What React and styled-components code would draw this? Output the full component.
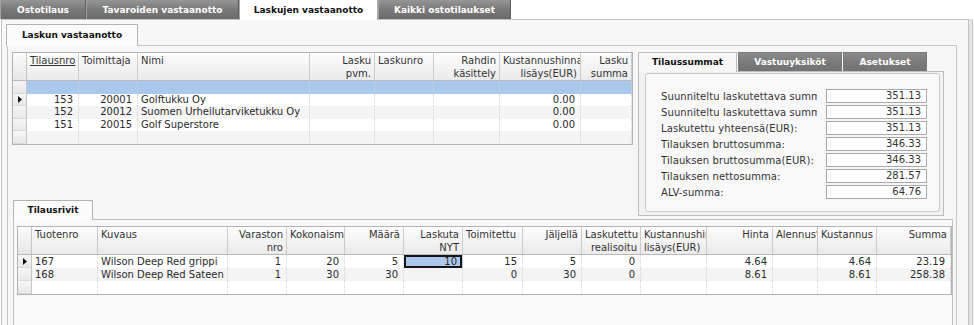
import React from 'react';
import styled, { createGlobalStyle } from 'styled-components';

const GlobalStyle = createGlobalStyle`
  html, body {
    margin: 0;
    padding: 0;
    background: #ffffff;
  }
  body {
    font-family: "DejaVu Sans", Verdana, sans-serif;
    font-size: 10px;
    color: #2b2b2b;
  }
  * {
    box-sizing: border-box;
  }
`;

const Screen = styled.div`
  width: 974px;
  height: 325px;
  overflow: hidden;
  display: flex;
  flex-direction: column;
  background: #fff;
`;

/* ---------- tabs ---------- */

const MainTabBar = styled.div`
  display: flex;
  align-items: flex-start;
  height: 19px;
  flex: none;
`;

const MainTab = styled.div`
  width: ${p => p.$w}px;
  height: ${p => (p.$active ? 20 : 19)}px;
  display: flex;
  align-items: center;
  justify-content: center;
  padding-bottom: ${p => (p.$active ? 1 : 0)}px;
  font-size: 9px;
  font-weight: bold;
  white-space: nowrap;
  color: ${p => (p.$active ? '#111' : '#fff')};
  background: ${p => (p.$active ? '#fff' : 'linear-gradient(#959595, #777 55%, #6b6b6b)')};
  border-left: 1px solid ${p => (p.$active ? '#a9a9a9' : '#a4a4a4')};
  border-right: 1px solid ${p => (p.$active ? '#a9a9a9' : '#5f5f5f')};
  position: relative;
  z-index: ${p => (p.$active ? 1 : 0)};
`;

const PageTab = styled.div`
  width: ${p => p.$w}px;
  height: ${p => p.$h}px;
  margin-left: ${p => p.$ml || 0}px;
  display: flex;
  align-items: center;
  justify-content: center;
  padding-bottom: 1px;
  font-size: 9px;
  font-weight: bold;
  color: #111;
  background: #fbfbfb;
  border: 1px solid #b3b3b3;
  border-bottom: none;
  position: relative;
  z-index: 1;
`;

const SideTab = styled.div`
  width: ${p => p.$w}px;
  height: ${p => (p.$active ? 20 : 19)}px;
  margin-right: 1px;
  display: flex;
  align-items: center;
  justify-content: center;
  padding-bottom: ${p => (p.$active ? 1 : 0)}px;
  font-size: 9px;
  font-weight: bold;
  color: ${p => (p.$active ? '#111' : '#fff')};
  background: ${p => (p.$active ? '#f7f7f7' : 'linear-gradient(#8c8c8c, #7a7a7a 50%, #737373)')};
  border: 1px solid ${p => (p.$active ? '#bdbdbd' : '#7a7a7a')};
  border-bottom: none;
  position: relative;
  z-index: ${p => (p.$active ? 1 : 0)};
`;

/* ---------- panels ---------- */

const OuterPanel = styled.div`
  flex: none;
  width: 968px;
  margin-left: 1px;
  border: 1px solid #c2c2c2;
  border-bottom: none;
  background: #f7f7f7;
  padding: 4px 11px 0 5px;
  box-shadow: 3px 0 0 #e4e4e4, 4px 0 0 #c6c6c6;
`;

const SubTabStrip = styled.div`
  display: flex;
  align-items: flex-start;
  height: 21px;
`;

const InnerPanel = styled.div`
  width: 950px;
  border: 1px solid #c6c6c6;
  border-bottom: none;
  background: #f6f6f6;
  padding: 6px 3px 0 4px;
  display: grid;
  grid-template-columns: 626px 306px 1fr;
  grid-template-rows: 148px 19px 130px;
`;

const OrdersArea = styled.div`
  grid-column: 1;
  grid-row: 1;
  align-self: start;
`;

const LinesTabArea = styled.div`
  grid-column: 1;
  grid-row: 2;
  display: flex;
  align-items: flex-start;
`;

const LinesPanel = styled.div`
  grid-column: 1 / -1;
  grid-row: 3;
  margin-left: 1px;
  border: 1px solid #c0c0c0;
  background: #f8f8f8;
  padding: 6px 0 0 3px;
`;

const SideTabs = styled.div`
  grid-column: 2;
  grid-row: 1 / span 2;
  align-self: start;
  height: 164px;
  display: flex;
  flex-direction: column;
`;

const SideTabStrip = styled.div`
  display: flex;
  align-items: flex-start;
  height: 19px;
  flex: none;
`;

const SidePage = styled.div`
  flex: 1;
  border: 1px solid #bdbdbd;
  background: #f1f1f1;
  padding: 1px 3px 3px 6px;
  display: flex;
`;

const GroupBox = styled.div`
  flex: 1;
  border: 1px solid #c9c9c9;
  border-radius: 3px;
  background: #f8f8f8;
  padding: 15px 12px 0 15px;
  display: flex;
  flex-direction: column;
  gap: 2px;
`;

const Field = styled.div`
  display: flex;
  align-items: center;
  height: 14px;
`;

const FieldLabel = styled.div`
  width: 156px;
  overflow: hidden;
  white-space: nowrap;
  color: #333;
  letter-spacing: 0.1px;
`;

const FieldValue = styled.div`
  margin-left: auto;
  width: 101px;
  height: 14px;
  border: 1px solid #a9a9a9;
  background: #fff;
  text-align: right;
  padding: 0 5px;
  line-height: 12px;
  color: #333;
`;

/* ---------- data grid ---------- */

const GridFrame = styled.div`
  display: grid;
  grid-template-columns: ${p => p.$cols};
  grid-template-rows: ${p => p.$headH}px;
  grid-auto-rows: ${p => p.$rowH}px;
  width: ${p => p.$width}px;
  border: 1px solid #b3b3b3;
  background: #fff;
`;

const CornerCell = styled.div`
  background: linear-gradient(#fbfbfb, #e6e6e6);
  border-right: 1px solid #c6c6c6;
  border-bottom: 1px solid #b9b9b9;
`;

const HeadCell = styled.div`
  background: linear-gradient(#fdfdfd, #eaeaea);
  border-right: 1px solid #cbcbcb;
  border-bottom: 1px solid #b9b9b9;
  padding: 1px 3px 0 3px;
  text-align: ${p => p.$align};
  line-height: 13px;
  color: #333;
  overflow: hidden;
  white-space: nowrap;
`;

const HeadLine = styled.span`
  display: block;
  text-decoration: ${p => (p.$sorted ? 'underline' : 'none')};
`;

const RowHead = styled.div`
  background: linear-gradient(#f6f6f6, #e8e8e8);
  border-right: 1px solid #c6c6c6;
  border-bottom: 1px solid #d9d9d9;
  display: flex;
  align-items: center;
  justify-content: center;
`;

const Cell = styled.div`
  background: ${p => p.$bg};
  border-right: 1px dotted #d3d3d3;
  padding: 0 5px 0 3px;
  text-align: ${p => p.$align};
  line-height: ${p => p.$rowH}px;
  color: #2a2a2a;
  overflow: hidden;
  white-space: nowrap;
  box-shadow: ${p => (p.$focus ? 'inset 0 0 0 2px #151515' : 'none')};
`;

const CurrentArrow = () => (
  <svg width="4" height="7" viewBox="0 0 4 7">
    <polygon points="0,0 4,3.5 0,7" fill="#111" />
  </svg>
);

const SELECT_BLUE = '#a9c8ec';

function DataGrid({ cols, rows, width, headH, rowH }) {
  const template = ['14px', ...cols.map(c => `${c.w}px`)].join(' ');
  return (
    <GridFrame $cols={template} $width={width} $headH={headH} $rowH={rowH}>
      <CornerCell />
      {cols.map(c => (
        <HeadCell key={c.key} $align={c.head}>
          {c.title.map((t, i) => (
            <HeadLine key={i} $sorted={c.sorted}>{t}</HeadLine>
          ))}
        </HeadCell>
      ))}
      {rows.map((r, i) => (
        <React.Fragment key={i}>
          <RowHead>{r.current && <CurrentArrow />}</RowHead>
          {cols.map(c => {
            const focus = r.focus === c.key;
            let bg = r.shade ? '#f4f4f4' : '#fff';
            if (r.blue || focus) bg = SELECT_BLUE;
            return (
              <Cell key={c.key} $align={c.align} $bg={bg} $rowH={rowH} $focus={focus}>
                {r[c.key]}
              </Cell>
            );
          })}
        </React.Fragment>
      ))}
    </GridFrame>
  );
}

/* ---------- data ---------- */

const mainTabs = [
  { label: 'Ostotilaus', w: 86 },
  { label: 'Tavaroiden vastaanotto', w: 153 },
  { label: 'Laskujen vastaanotto', w: 139, active: true },
  { label: 'Kaikki ostotilaukset', w: 133 },
];

const sideTabs = [
  { label: 'Tilaussummat', w: 99, active: true },
  { label: 'Vastuuyksiköt', w: 104 },
  { label: 'Asetukset', w: 84 },
];

const orderCols = [
  { key: 'no', title: ['Tilausnro'], w: 52, align: 'right', head: 'left', sorted: true },
  { key: 'sup', title: ['Toimittaja'], w: 59, align: 'right', head: 'left' },
  { key: 'name', title: ['Nimi'], w: 172, align: 'left', head: 'left' },
  { key: 'date', title: ['Lasku', 'pvm.'], w: 65, align: 'right', head: 'right' },
  { key: 'inv', title: ['Laskunro'], w: 59, align: 'left', head: 'left' },
  { key: 'freight', title: ['Rahdin', 'käsittely'], w: 66, align: 'right', head: 'right' },
  { key: 'cost', title: ['Kustannushinnan', 'lisäys(EUR)'], w: 81, align: 'right', head: 'right' },
  { key: 'sum', title: ['Lasku', 'summa'], w: 51, align: 'right', head: 'right' },
];

const orders = [
  { blue: true },
  { no: '153', sup: '20001', name: 'Golftukku Oy', cost: '0.00', current: true },
  { no: '152', sup: '20012', name: 'Suomen Urheilutarviketukku Oy', cost: '0.00', shade: true },
  { no: '151', sup: '20015', name: 'Golf Superstore', cost: '0.00' },
  { shade: true },
];

const lineCols = [
  { key: 'prod', title: ['Tuotenro'], w: 66, align: 'left', head: 'left' },
  { key: 'desc', title: ['Kuvaus'], w: 130, align: 'left', head: 'left' },
  { key: 'wh', title: ['Varaston', 'nro'], w: 59, align: 'right', head: 'right' },
  { key: 'total', title: ['Kokonaismäärä'], w: 58, align: 'right', head: 'left' },
  { key: 'qty', title: ['Määrä'], w: 59, align: 'right', head: 'right' },
  { key: 'now', title: ['Laskuta', 'NYT'], w: 59, align: 'right', head: 'right' },
  { key: 'deliv', title: ['Toimitettu'], w: 60, align: 'right', head: 'left' },
  { key: 'rest', title: ['Jäljellä'], w: 59, align: 'right', head: 'right' },
  { key: 'real', title: ['Laskutettu', 'realisoitu'], w: 59, align: 'right', head: 'right' },
  { key: 'extra', title: ['Kustannushinnan', 'lisäys(EUR)'], w: 66, align: 'right', head: 'left' },
  { key: 'price', title: ['Hinta'], w: 66, align: 'right', head: 'right' },
  { key: 'disc', title: ['Alennus%'], w: 45, align: 'right', head: 'left' },
  { key: 'costp', title: ['Kustannus'], w: 59, align: 'right', head: 'left' },
  { key: 'sum', title: ['Summa'], w: 74, align: 'right', head: 'right' },
];

const lines = [
  {
    prod: '167', desc: 'Wilson Deep Red grippi', wh: '1', total: '20', qty: '5', now: '10',
    deliv: '15', rest: '5', real: '0', price: '4.64', costp: '4.64', sum: '23.19',
    current: true, focus: 'now',
  },
  {
    prod: '168', desc: 'Wilson Deep Red Sateen', wh: '1', total: '30', qty: '30',
    deliv: '0', rest: '30', real: '0', price: '8.61', costp: '8.61', sum: '258.38', shade: true,
  },
  {},
];

const totals = [
  ['Suunniteltu laskutettava summa:', '351.13'],
  ['Suunniteltu laskutettava summa(EUR):', '351.13'],
  ['Laskutettu yhteensä(EUR):', '351.13'],
  ['Tilauksen bruttosumma:', '346.33'],
  ['Tilauksen bruttosumma(EUR):', '346.33'],
  ['Tilauksen nettosumma:', '281.57'],
  ['ALV-summa:', '64.76'],
];

export default function App() {
  return (
    <>
      <GlobalStyle />
      <Screen>
        <MainTabBar>
          {mainTabs.map(t => (
            <MainTab key={t.label} $w={t.w} $active={t.active}>{t.label}</MainTab>
          ))}
        </MainTabBar>

        <OuterPanel>
          <SubTabStrip>
            <PageTab $w={132} $h={22} $ml={-1}>Laskun vastaanotto</PageTab>
          </SubTabStrip>

          <InnerPanel>
            <OrdersArea>
              <DataGrid cols={orderCols} rows={orders} width={621} headH={28} rowH={12.5} />
            </OrdersArea>

            <SideTabs>
              <SideTabStrip>
                {sideTabs.map(t => (
                  <SideTab key={t.label} $w={t.w} $active={t.active}>{t.label}</SideTab>
                ))}
              </SideTabStrip>
              <SidePage>
                <GroupBox>
                  {totals.map(([label, value]) => (
                    <Field key={label}>
                      <FieldLabel>{label}</FieldLabel>
                      <FieldValue>{value}</FieldValue>
                    </Field>
                  ))}
                </GroupBox>
              </SidePage>
            </SideTabs>

            <LinesTabArea>
              <PageTab $w={80} $h={20} $ml={1}>Tilausrivit</PageTab>
            </LinesTabArea>

            <LinesPanel>
              <DataGrid cols={lineCols} rows={lines} width={935} headH={28} rowH={13} />
            </LinesPanel>
          </InnerPanel>
        </OuterPanel>
      </Screen>
    </>
  );
}
